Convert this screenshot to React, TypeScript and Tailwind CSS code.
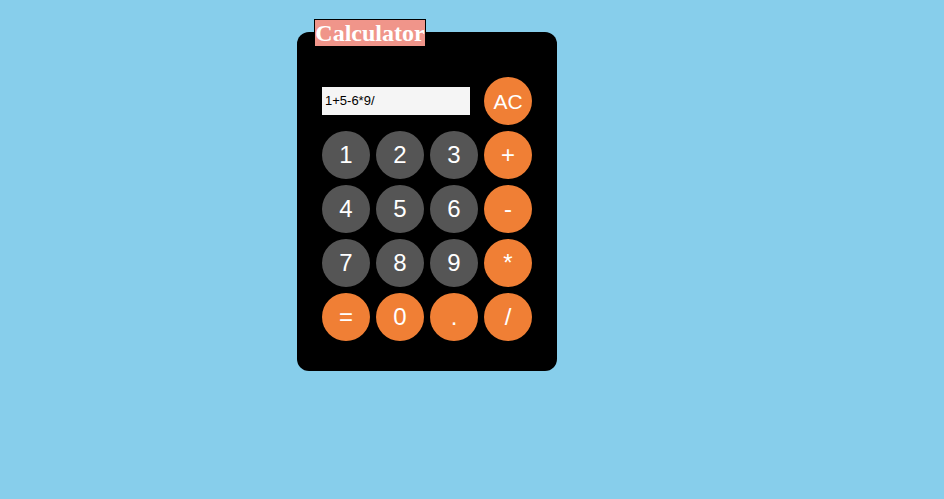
import React from "react";

function Btn({ label, kind, small }: { label: string; kind: "o" | "g"; small?: boolean }) {
  return (
    <div
      className={`w-[48px] h-[48px] rounded-full flex items-center justify-center text-white leading-none ${
        small ? "text-[21px]" : "text-[24px]"
      } ${kind === "o" ? "bg-[#f07f35]" : "bg-[#555555]"}`}
      style={{ fontFamily: '"Liberation Sans", Arial, sans-serif' }}
    >
      {label}
    </div>
  );
}

export default function App() {
  const rows: [string, "o" | "g"][][] = [
    [["1", "g"], ["2", "g"], ["3", "g"], ["+", "o"]],
    [["4", "g"], ["5", "g"], ["6", "g"], ["-", "o"]],
    [["7", "g"], ["8", "g"], ["9", "g"], ["*", "o"]],
    [["=", "o"], ["0", "o"], [".", "o"], ["/", "o"]],
  ];
  return (
    <div className="w-[944px] h-[499px] bg-[#87ceeb] pt-[19px] pl-[297px]">
      <div className="ml-[17px] relative z-10 inline-block">
        <div
          className="h-[28px] w-[112px] border border-black bg-[#f0958a] text-white font-bold text-[24px] leading-[26px] flex items-center justify-center"
          style={{ fontFamily: '"Liberation Serif", "Times New Roman", serif' }}
        >
          Calculator
        </div>
      </div>
      <div className="-mt-[15px] w-[260px] h-[339px] bg-black rounded-[12px] pl-[25px] pt-[45px]">
        <div className="flex items-center gap-[14px] h-[48px]">
          <div
            className="w-[148px] h-[28px] bg-[#f5f5f5] text-black text-[13px] flex items-center pl-[3px]"
            style={{ fontFamily: '"Liberation Sans", Arial, sans-serif' }}
          >
            1+5-6*9/
          </div>
          <Btn label="AC" kind="o" small />
        </div>
        <div className="flex flex-col gap-[6px] mt-[6px]">
          {rows.map((r, i) => (
            <div key={i} className="flex gap-[6px]">
              {r.map(([l, k]) => (
                <Btn key={l} label={l} kind={k} />
              ))}
            </div>
          ))}
        </div>
      </div>
    </div>
  );
}
